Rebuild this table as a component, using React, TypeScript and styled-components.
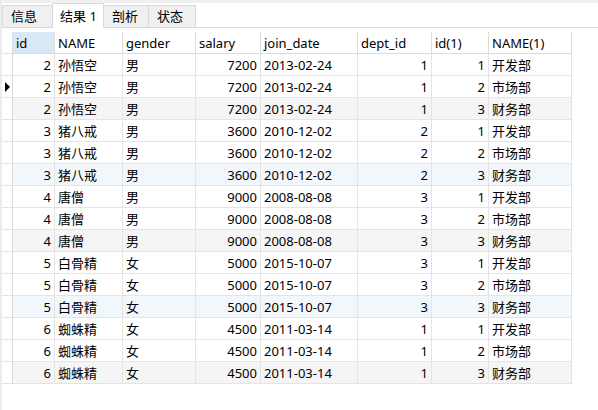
import React from "react";
import styled, { createGlobalStyle } from "styled-components";

const Global = createGlobalStyle`
  html, body { margin: 0; padding: 0; background: #fff; }
  body { font-family: "Noto Sans", "Noto Sans CJK SC", sans-serif; font-size: 13px; color: #000; }
`;

const Page = styled.div`
  display: flex;
  width: 598px;
  height: 410px;
  overflow: hidden;
  background: #fff;
`;

const LeftStrip = styled.div`
  width: 2px;
  flex: none;
  background: #ececec;
`;

const Main = styled.div`
  flex: 1;
  display: flex;
  flex-direction: column;
`;

const TabBar = styled.div`
  display: flex;
  align-items: flex-end;
  height: 28px;
  box-sizing: border-box;
  border-top: 3px solid #f0f0f0;
  border-bottom: 1px solid #d9d9d9;
`;

const Tab = styled.div<{ $active?: boolean; $w: number }>`
  width: ${(p) => p.$w}px;
  height: ${(p) => (p.$active ? 25 : 22)}px;
  margin-bottom: ${(p) => (p.$active ? -1 : 0)}px;
  margin-left: -1px;
  box-sizing: border-box;
  border: 1px solid #d9d9d9;
  border-bottom: none;
  background: ${(p) => (p.$active ? "#fff" : "#f0f0f0")};
  display: flex;
  align-items: center;
  padding-left: ${(p) => (p.$active ? 7 : 8)}px;
  font-size: 13px;
  line-height: 1;
  position: relative;
  z-index: ${(p) => (p.$active ? 1 : 0)};
  &:first-child { margin-left: 0; }
`;

const Grid = styled.div`
  margin-top: 4px;
  display: grid;
  grid-template-columns: 11px 42px 68px 73px 65px 97px 74px 57px 83px;
  grid-auto-rows: 22px;
  width: max-content;
`;

const Cell = styled.div<{ $right?: boolean; $bg?: string }>`
  box-sizing: border-box;
  border-right: 1px solid #e4e4e4;
  border-bottom: 1px solid #e4e4e4;
  background: ${(p) => p.$bg || "transparent"};
  display: flex;
  align-items: center;
  justify-content: ${(p) => (p.$right ? "flex-end" : "flex-start")};
  padding: 0 3px;
  white-space: nowrap;
  overflow: hidden;
  font-size: 13px;
`;

const HeadCell = styled(Cell)<{ $sel?: boolean }>`
  background: ${(p) => (p.$sel ? "#d9e8f7" : "#fff")};
  border-bottom-color: #dcdcdc;
  border-right-color: #dcdcdc;
`;

const Indicator = styled.div<{ $bg?: string }>`
  box-sizing: border-box;
  border-right: 1px solid #dcdcdc;
  border-bottom: 1px solid #e4e4e4;
  background: #fff;
  display: flex;
  align-items: center;
  padding-left: 3px;
`;

const Arrow = styled.span`
  width: 0;
  height: 0;
  border-top: 5px solid transparent;
  border-bottom: 5px solid transparent;
  border-left: 5px solid #000;
`;

const tabs = [
  { t: "信息", w: 51 },
  { t: "结果 1", w: 52, a: true },
  { t: "剖析", w: 46 },
  { t: "状态", w: 48 },
];

const headers = ["id", "NAME", "gender", "salary", "join_date", "dept_id", "id(1)", "NAME(1)"];
const rightCols = [0, 3, 5, 6];

const people: [number, string, string, number, string, number][] = [
  [2, "孙悟空", "男", 7200, "2013-02-24", 1],
  [3, "猪八戒", "男", 3600, "2010-12-02", 2],
  [4, "唐僧", "男", 9000, "2008-08-08", 3],
  [5, "白骨精", "女", 5000, "2015-10-07", 3],
  [6, "蜘蛛精", "女", 4500, "2011-03-14", 1],
];
const depts = ["开发部", "市场部", "财务部"];

const rows: (string | number)[][] = [];
people.forEach((p) => depts.forEach((d, i) => rows.push([...p, i + 1, d])));

const rowBg = (i: number) => {
  if (i % 3 !== 2) return undefined;
  return Math.floor(i / 3) % 2 === 0 ? "#f5f5f5" : "#f2f7fc";
};

export default function App() {
  return (
    <Page>
      <Global />
      <LeftStrip />
      <Main>
        <TabBar>
          {tabs.map((t) => (
            <Tab key={t.t} $w={t.w} $active={t.a}>
              {t.t}
            </Tab>
          ))}
        </TabBar>
        <Grid>
          <Indicator />
          {headers.map((h, i) => (
            <HeadCell key={h} $sel={i === 0}>
              {h}
            </HeadCell>
          ))}
          {rows.map((r, ri) => (
            <React.Fragment key={ri}>
              <Indicator>{ri === 1 && <Arrow />}</Indicator>
              {r.map((v, ci) => (
                <Cell key={ci} $right={rightCols.includes(ci)} $bg={rowBg(ri)}>
                  {v}
                </Cell>
              ))}
            </React.Fragment>
          ))}
        </Grid>
      </Main>
    </Page>
  );
}
